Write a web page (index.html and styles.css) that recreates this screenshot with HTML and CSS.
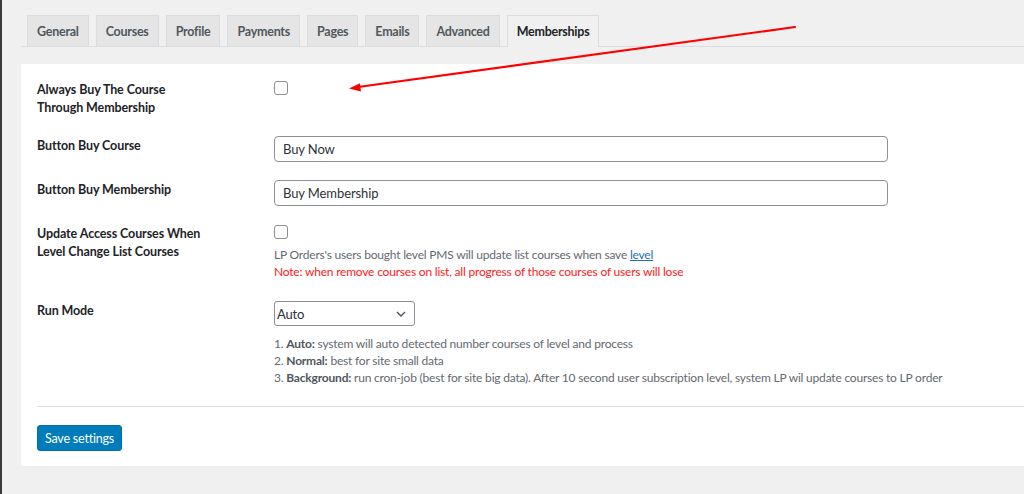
FILE: index.html
```html
<!DOCTYPE html>
<html lang="en">
<head>
<meta charset="utf-8">
<title>Memberships settings</title>
<link rel="stylesheet" href="styles.css">
</head>
<body>
<div class="page">
  <nav class="tabs">
    <a class="tab">General</a>
    <a class="tab">Courses</a>
    <a class="tab">Profile</a>
    <a class="tab">Payments</a>
    <a class="tab">Pages</a>
    <a class="tab">Emails</a>
    <a class="tab">Advanced</a>
    <a class="tab tab-active">Memberships</a>
  </nav>

  <section class="panel">
    <div class="rows">
      <div class="row">
        <div class="label">Always Buy The Course<br>Through Membership</div>
        <div class="field"><span class="checkbox"></span></div>
      </div>
      <div class="row row-gap19">
        <div class="label">Button Buy Course</div>
        <div class="field"><div class="input">Buy Now</div></div>
      </div>
      <div class="row row-gap18">
        <div class="label">Button Buy Membership</div>
        <div class="field"><div class="input">Buy Membership</div></div>
      </div>
      <div class="row row-gap18">
        <div class="label">Update Access Courses When<br>Level Change List Courses</div>
        <div class="field">
          <span class="checkbox"></span>
          <p class="desc desc-after-check">LP Orders's users bought level PMS will update list courses when save <a class="link">level</a></p>
          <p class="desc note">Note: when remove courses on list, all progress of those courses of users will lose</p>
        </div>
      </div>
      <div class="row row-gap21">
        <div class="label">Run Mode</div>
        <div class="field">
          <div class="select">
            <span>Auto</span>
            <svg class="chev" width="10" height="6" viewBox="0 0 10 6"><path d="M1 1l4 4 4-4" fill="none" stroke="#50575e" stroke-width="1.4"/></svg>
          </div>
          <div class="modes">
            <p class="desc">1. <b>Auto:</b> system will auto detected number courses of level and process</p>
            <p class="desc">2. <b>Normal:</b> best for site small data</p>
            <p class="desc">3. <b>Background:</b> run cron-job (best for site big data). After 10 second user subscription level, system LP wil update courses to LP order</p>
          </div>
        </div>
      </div>
    </div>
    <hr class="sep">
    <button class="btn">Save settings</button>
  </section>
</div>
<svg class="arrow" width="1024" height="494" viewBox="0 0 1024 494">
  <line x1="795" y1="27" x2="358" y2="87" stroke="#ff0000" stroke-width="2.2" stroke-linecap="round"/>
  <path d="M349 88.5 L360 83.3 L361 91.6 Z" fill="#ff0000"/>
</svg>
</body>
</html>
```
FILE: styles.css
```css
html, body {
  margin: 0;
  padding: 0;
  height: 100%;
}
body {
  background: #f0f0f1;
  font-family: Lato, "Noto Sans", sans-serif;
  font-size: 12px;
  letter-spacing: -0.2px;
  color: #3c434a;
  overflow: hidden;
  position: relative;
}
.page {
  min-height: 100%;
  border-left: 2px solid #3a3a3a;
  padding-left: 19px;
  box-sizing: border-box;
}
.tabs {
  display: flex;
  gap: 7px;
  padding: 15px 0 0 6px;
  border-bottom: 1px solid #dcdcde;
}
.tab {
  display: block;
  height: 30px;
  line-height: 31px;
  padding: 0 9px;
  border: 1px solid #dcdcde;
  border-bottom: none;
  background: #e5e5e5;
  color: #50575e;
  font-weight: 700;
  font-size: 12.5px;
  letter-spacing: -0.25px;
  text-decoration: none;
}
.tab-active {
  background: #f0f0f1;
  color: #1d2327;
  height: 31px;
  margin-bottom: -1px;
}
.panel {
  margin-top: 17px;
  background: #fff;
  padding: 16px 0 15px 16px;
}
.rows {
  display: flex;
  flex-direction: column;
}
.row {
  display: grid;
  grid-template-columns: 237px 1fr;
}
.row-gap18 { margin-top: 18px; }
.row-gap19 { margin-top: 19px; }
.row-gap21 { margin-top: 21px; }
.label {
  padding-top: 1px;
  font-weight: 700;
  font-size: 12.5px;
  letter-spacing: -0.1px;
  color: #1d2327;
  line-height: 18px;
}
.field {
  display: flex;
  flex-direction: column;
  align-items: flex-start;
}
.checkbox {
  display: block;
  width: 12px;
  height: 12px;
  margin-top: 1px;
  border: 1px solid #8c8f94;
  border-radius: 3px;
  background: #fff;
}
.input {
  box-sizing: border-box;
  width: 614px;
  height: 26px;
  line-height: 24px;
  padding: 0 8px;
  border: 1px solid #8c8f94;
  border-radius: 4px;
  color: #2c3338;
  font-size: 13px;
  letter-spacing: -0.1px;
}
.desc {
  margin: 0;
  line-height: 17px;
  color: #646970;
}
.desc b {
  font-weight: 700;
  color: #50575e;
}
.desc-after-check {
  margin-top: 7px;
}
.note {
  color: #ff1a1a;
}
.link {
  color: #2271b1;
  text-decoration: underline;
}
.select {
  box-sizing: border-box;
  width: 141px;
  height: 25px;
  display: flex;
  align-items: center;
  justify-content: space-between;
  padding: 0 8px 0 2px;
  border: 1px solid #8c8f94;
  border-radius: 3px;
  color: #2c3338;
  font-size: 13px;
}
.chev {
  display: block;
}
.modes {
  margin-top: 9px;
}
.sep {
  margin: 20px 0 18px;
  border: 0;
  border-top: 1px solid #dcdcde;
}
.btn {
  display: block;
  height: 26px;
  padding: 0 7px;
  border: 1px solid #0071a1;
  border-radius: 3px;
  background: #007cba;
  color: #fff;
  font-family: inherit;
  font-size: 12.5px;
  letter-spacing: -0.2px;
}
.arrow {
  position: absolute;
  top: 0;
  left: 0;
  pointer-events: none;
}
```
